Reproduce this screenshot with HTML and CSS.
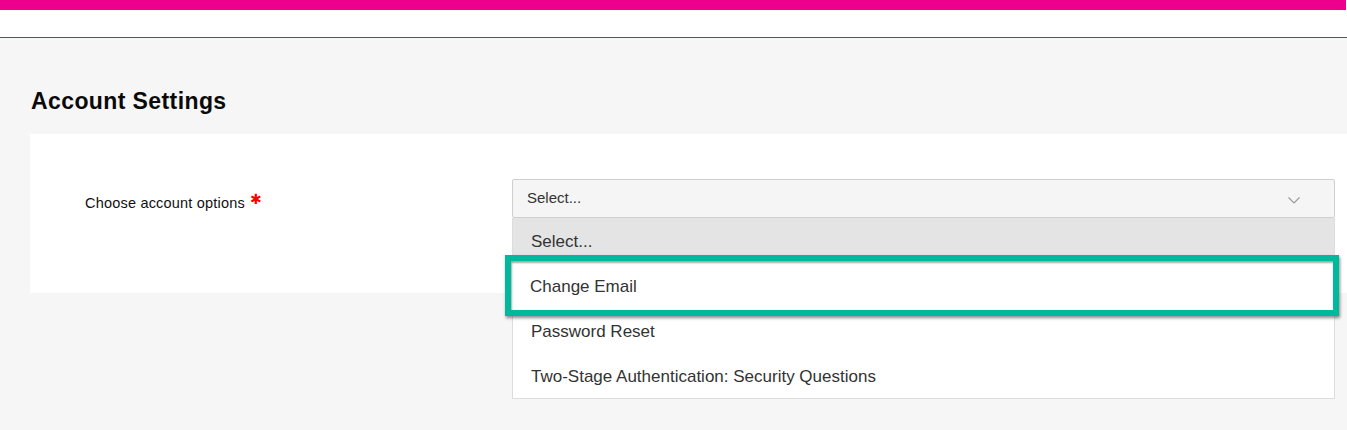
FILE: index.html
```html
<!DOCTYPE html>
<html lang="en">
<head>
<meta charset="utf-8">
<title>Account Settings</title>
<link rel="stylesheet" href="styles.css">
</head>
<body>
<header class="topbar">
  <div class="brand-strip"></div>
  <div class="nav-space"></div>
</header>
<main class="page">
  <h1 class="title">Account Settings</h1>
  <section class="card">
    <div class="field">
      <label class="field-label">Choose account options <span class="req">✱</span></label>
      <div class="select-wrap">
        <div class="select">
          <span class="select-value">Select...</span>
          <svg class="chev" width="12" height="7" viewBox="0 0 12 7"><path d="M0.5 0.5 L6 6 L11.5 0.5" fill="none" stroke="#9a9a9a" stroke-width="1.2"/></svg>
        </div>
        <ul class="menu">
          <li class="opt opt-active">Select...</li>
          <li class="opt">Change Email</li>
          <li class="opt">Password Reset</li>
          <li class="opt">Two-Stage Authentication: Security Questions</li>
        </ul>
        <div class="highlight"><span>Change Email</span></div>
      </div>
    </div>
  </section>
</main>
</body>
</html>
```

FILE: styles.css
```css
* { box-sizing: border-box; }
html, body { margin: 0; padding: 0; }
body {
  font-family: "Liberation Sans", Arial, Helvetica, sans-serif;
  background: #f6f6f6;
  color: #111;
  height: 430px;
  overflow: hidden;
}
.topbar { background: #fff; }
.brand-strip { height: 10px; background: #ec008c; margin-right: 1px; }
.nav-space { height: 28px; border-bottom: 1px solid #c8137f; }
.page { padding: 50px 0 0 30px; }
.title {
  margin: 0 0 20px 1px;
  font-size: 23px;
  line-height: 26px;
  letter-spacing: 0.4px;
  font-weight: bold;
  color: #0a0a0a;
}
.card {
  background: #fff;
  height: 159px;
  padding: 45px 12px 0 55px;
}
.field { display: flex; align-items: flex-start; }
.field-label {
  width: 427px;
  flex: none;
  font-size: 14.5px;
  letter-spacing: 0.2px;
  line-height: 16px;
  padding-top: 16px;
  color: #111;
}
.req { color: #f00; font-size: 14px; position: relative; top: -4px; margin-left: 1px; }
.select-wrap { position: relative; width: 823px; }
.select {
  height: 39px;
  background: #f5f5f5;
  border: 1px solid #cfcfcf;
  border-radius: 2px;
  display: flex;
  align-items: center;
  justify-content: space-between;
  padding: 0 34px 0 14px;
  font-size: 15px;
  color: #333;
}
.select-value { position: relative; top: -1px; }
.chev { position: relative; top: 2px; }
.menu {
  position: absolute;
  left: 0;
  top: 39px;
  width: 823px;
  margin: 0;
  padding: 0;
  list-style: none;
  background: #fff;
  border: 1px solid #ddd;
  border-top: none;
}
.opt {
  height: 45px;
  display: flex;
  align-items: center;
  padding: 2px 0 0 18px;
  font-size: 17px;
  color: #333;
}
.opt-active { background: #e4e4e4; }
.highlight {
  position: absolute;
  left: -7px;
  top: 76px;
  width: 834px;
  height: 61px;
  border: 6px solid #00b89c;
  background: #fff;
  box-shadow: 1px 2px 3px rgba(0,0,0,0.45), inset 1px 2px 2px rgba(0,0,0,0.35);
  display: flex;
  align-items: center;
  padding: 2px 0 0 19px;
  font-size: 17px;
  color: #333;
}
```
